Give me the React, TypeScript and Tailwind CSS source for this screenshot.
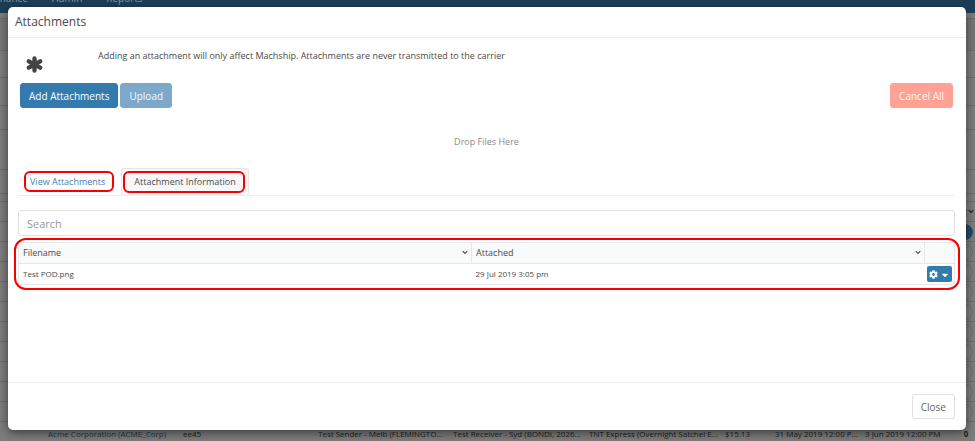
import type { ReactNode } from "react";
import { FaCog, FaCaretDown } from "react-icons/fa";

const cx = (...parts: (string | false | undefined)[]) => parts.filter(Boolean).join(" ");

function Chevron({ className }: { className?: string }) {
  return (
    <svg viewBox="0 0 8 8" className={cx("h-2 w-2", className)} fill="none" stroke="currentColor" strokeWidth="1.1" aria-hidden="true">
      <path d="M1.7 2.2 L4 4.5 L6.3 2.2" />
    </svg>
  );
}

function Asterisk({ className }: { className?: string }) {
  return (
    <svg viewBox="0 0 18 18" className={className} fill="none" stroke="currentColor" strokeWidth="4.6" strokeLinecap="round" aria-hidden="true">
      <path d="M9 2.6 V15.4 M3 5.6 L15 12.4 M15 5.6 L3 12.4" />
    </svg>
  );
}

const rows = [0, 1, 2, 3, 4, 5, 6, 7, 8, 9];

function ConsignmentPage() {
  return (
    <div aria-hidden="true" className="flex h-screen flex-col overflow-hidden bg-[#7c7c7c] text-[8px] text-[#202020]">
      <nav className="flex h-[13px] shrink-0 items-start gap-3 overflow-hidden bg-[#1b3e57] text-[10px] leading-4 text-[#8a959d]">
        <span className="-mt-2.5 -ml-2 flex items-center gap-1">Finance <Chevron /></span>
        <span className="-mt-2.5 flex items-center gap-1">Admin <Chevron /></span>
        <span className="-mt-2.5 flex items-center gap-1">Reports <Chevron /></span>
      </nav>
      <div className="h-[6px] shrink-0 border-b border-[#6c6c6c]" />
      <div className="h-8 shrink-0 border-b border-[#6c6c6c] bg-[#757575]" />
      <div className="h-[27px] shrink-0 border-b border-[#6c6c6c]" />
      <div className="h-7 shrink-0 border-b border-[#6c6c6c]" />
      <div className="h-6 shrink-0 border-b border-[#6c6c6c]" />
      <div className="h-10 shrink-0 border-b border-[#6c6c6c]" />
      <div className="h-6 shrink-0 border-b border-[#6c6c6c]" />
      <div className="h-2 shrink-0 border-b border-[#6c6c6c]" />
      <div className="flex h-5 shrink-0 items-center justify-end border-b border-[#6c6c6c] text-[9px]">
        t<Chevron className="w-1.5" />
      </div>
      {rows.map((i) => (
        <div key={i} className="flex h-5 shrink-0 items-center justify-end border-b border-[#6c6c6c] pr-0.5">
          <span className={cx("size-4 rounded-full border", i === 0 ? "border-[#1f4a69] bg-[#1f4a69]" : "border-[#6c6c6c]")} />
        </div>
      ))}
      <div className="grid shrink-0 grid-cols-[minmax(0,135fr)_minmax(0,135fr)_minmax(0,135fr)_minmax(0,136fr)_minmax(0,136fr)_minmax(0,50fr)_minmax(0,90fr)_minmax(0,92fr)_minmax(0,18fr)] whitespace-nowrap pt-1 pl-12 leading-[15px]">
        <span className="text-[#1b3649]">Acme Corporation (ACME_Corp)</span>
        <span>ee45</span>
        <span>Test Sender - Melb (FLEMINGTO...</span>
        <span>Test Receiver - Syd (BONDI, 2026...</span>
        <span>TNT Express (Overnight Satchel E...</span>
        <span>$15.13</span>
        <span>31 May 2019 12:00 P...</span>
        <span>3 Jun 2019 12:00 PM</span>
        <span className="justify-self-center font-bold">0</span>
      </div>
    </div>
  );
}

function Highlight({ className }: { className: string }) {
  return <span aria-hidden="true" className={cx("pointer-events-none absolute border-2 border-[#f80000]", className)} />;
}

function Button({ className, children }: { className: string; children: ReactNode }) {
  return (
    <button type="button" className={cx("h-[25px] rounded-[3px] border px-2 text-[10px] leading-4", className)}>
      {children}
    </button>
  );
}

export default function App() {
  return (
    <div className="relative h-screen overflow-hidden font-['Open_Sans','Noto_Sans',sans-serif]">
      <ConsignmentPage />
      <div
        role="dialog"
        aria-labelledby="dialog-title"
        className="absolute top-[7px] right-[9px] bottom-[11px] left-2 flex flex-col rounded-[5px] bg-white text-[#4a4a4a] shadow-[0_3px_10px_rgba(0,0,0,0.5)]"
      >
        <header className="border-b border-[#eeeeee] px-[7px] py-1.5">
          <h1 id="dialog-title" className="text-[12px] leading-[18px]">Attachments</h1>
        </header>

        <main className="flex-1 pt-2 pr-[11px] pl-[10px]">
          <div className="flex px-2 text-[9px]">
            <Asterisk className="mt-2.5 size-[17px] text-[#444]" />
            <p className="ml-[55px] leading-5">
              Adding an attachment will only affect Machship. Attachments are never transmitted to the carrier
            </p>
          </div>

          <div className="mt-2.5 flex gap-0.5 px-0.5">
            <Button className="border-[#347bad] bg-[#347bad] text-white">Add Attachments</Button>
            <Button className="border-[#7ca9ca] bg-[#7ca9ca] text-[#f3f8fb]">Upload</Button>
            <Button className="ml-auto border-[#ffa295] bg-[#ffa295] text-[#fff4f2]">Cancel All</Button>
          </div>

          <p className="mt-6 text-center text-[9px] leading-5 text-[#8a8a8a]">Drop Files Here</p>

          <div role="tablist" className="mt-4 flex gap-1 border-b border-[#eeeeee] text-[9px]">
            <button type="button" role="tab" aria-selected="false" className="relative px-3 leading-[27px] text-[#4680ad]">
              View Attachments
              <Highlight className="inset-y-[3px] right-[3px] left-1.5 rounded-md" />
            </button>
            <button
              type="button"
              role="tab"
              aria-selected="true"
              className="relative rounded-t-[3px] border border-b-0 border-[#e7e7ea] bg-[#f7f7fa] px-3 pb-px leading-[25px]"
            >
              Attachment Information
              <Highlight className="inset-y-0.5 right-[3px] left-px rounded-md" />
            </button>
          </div>

          <input
            type="search"
            aria-label="Search"
            placeholder="Search"
            className="mt-3.5 block h-[26px] w-full rounded-[3px] border border-[#e1e1e1] px-2 text-[11px] placeholder:text-[#999]"
          />

          <div className="relative mt-1.5">
            <table className="w-full table-fixed border-collapse border border-[#e7e7e7] text-left text-[9px]">
              <thead className="bg-[#f9fafc]">
                <tr className="h-[21px]">
                  {["Filename", "Attached"].map((name) => (
                    <th key={name} scope="col" className="border border-[#e7e7e7] pr-0.5 pl-1 font-normal">
                      <div className="flex items-center justify-between">
                        {name}
                        <Chevron />
                      </div>
                    </th>
                  ))}
                  <th className="w-[30px] border border-[#e7e7e7]" aria-label="Actions" />
                </tr>
              </thead>
              <tbody className="text-[8px]">
                <tr className="h-[21px]">
                  <td className="px-1">Test POD.png</td>
                  <td className="px-1">29 Jul 2019 3:05 pm</td>
                  <td>
                    <button
                      type="button"
                      aria-label="Row actions"
                      className="mx-auto flex h-4 w-[25px] items-center justify-center gap-0.5 rounded-[2px] bg-[#347bad] text-white"
                    >
                      <FaCog className="size-[9px]" />
                      <FaCaretDown className="mt-0.5 size-2.5" />
                    </button>
                  </td>
                </tr>
              </tbody>
            </table>
            <Highlight className="-top-1 -right-[5px] -bottom-[5px] -left-1 rounded-[12px]" />
          </div>
        </main>

        <footer className="flex justify-end border-t border-[#eeeeee] px-[11px] py-[11px]">
          <Button className="border-[#e1e1e1] bg-white text-[#666]">Close</Button>
        </footer>
      </div>
    </div>
  );
}
